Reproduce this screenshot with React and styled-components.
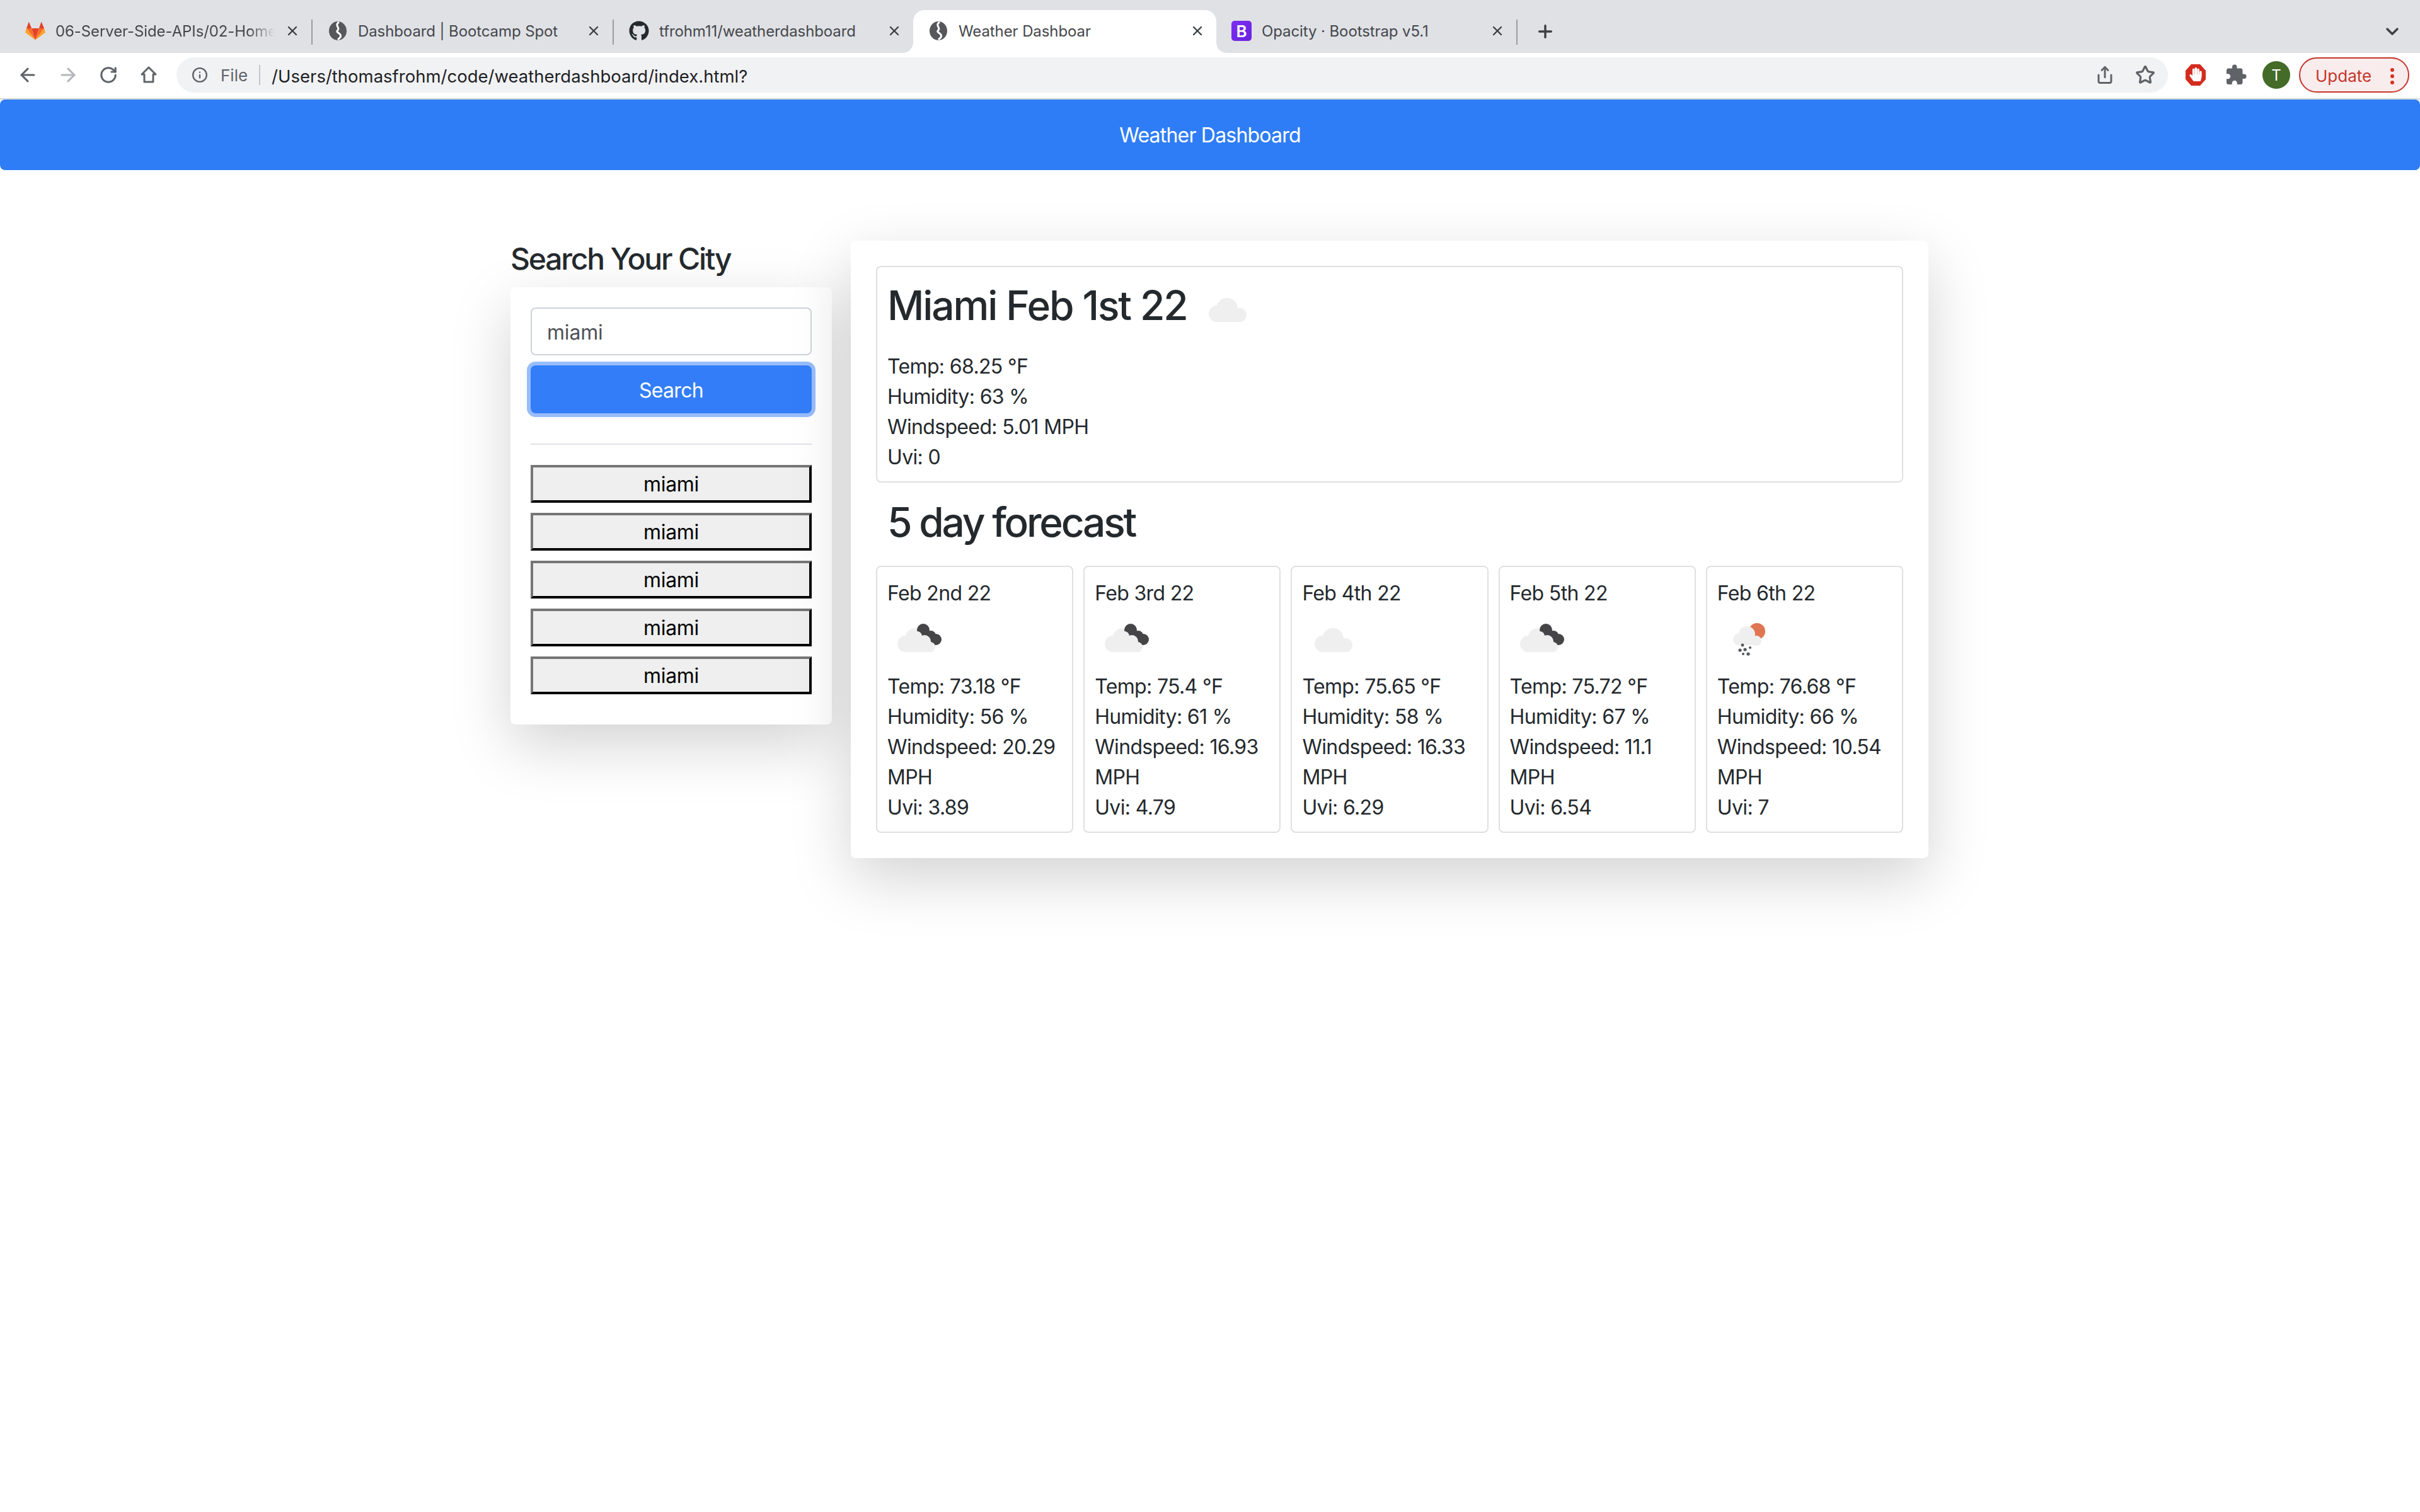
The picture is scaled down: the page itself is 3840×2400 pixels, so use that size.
import React from "react";
import styled, { createGlobalStyle } from "styled-components";
import { ArrowLeft, ArrowRight, RotateCw, Info, Share, Star, X, Plus, ChevronDown } from "lucide-react";
import { FaGithub, FaHandPaper } from "react-icons/fa";
import { MdExtension } from "react-icons/md";

const Global = createGlobalStyle`
  html, body { margin: 0; padding: 0; background: #fff; }
  body { font-family: Inter, "Liberation Sans", sans-serif; color: #24292d; min-height: 2400px; }
  * { box-sizing: border-box; }
`;

const TabBar = styled.div`
  height: 84px; background: #dfe1e5; display: flex; align-items: flex-end; padding-left: 16px; position: relative;
`;
const Tab = styled.div`
  width: ${p => p.$w}px; height: 68px; display: flex; align-items: center; gap: 16px; padding: 0 18px 2px 24px;
  position: relative; font-size: 24px; color: #45474b; letter-spacing: -.1px;
  background: ${p => (p.$active ? "#fff" : "transparent")};
  border-radius: 18px 18px 0 0;
  ${p => p.$active && `
    &::before, &::after { content: ""; position: absolute; bottom: 0; width: 16px; height: 16px; }
    &::before { left: -16px; background: radial-gradient(circle at 0 0, transparent 15.5px, #fff 16px); }
    &::after { right: -16px; background: radial-gradient(circle at 100% 0, transparent 15.5px, #fff 16px); }
  `}
`;
const TabTitle = styled.span`
  flex: 1; white-space: nowrap; overflow: hidden;
  ${p => p.$fade && `mask-image: linear-gradient(to right, #000 88%, transparent 100%);`}
`;
const TabClose = styled.span`
  width: 24px; height: 24px; display: flex; align-items: center; justify-content: center; color: #3c4043;
`;
const FavBox = styled.span`
  width: 32px; height: 32px; flex: none; display: flex; align-items: center; justify-content: center;
`;
const BootstrapFav = styled.span`
  width: 32px; height: 32px; flex: none; border-radius: 5px; background: linear-gradient(135deg,#7b2ff0,#6a22e0);
  color: #fff; font-size: 26px; font-weight: 600; display: flex; align-items: center; justify-content: center;
`;
const TabDivider = styled.span`
  width: 2px; height: 40px; flex: none; align-self: flex-start; margin-top: 31px; background: #9a9ca0;
`;
const NewTab = styled.span`
  margin-left: 28px; width: 32px; height: 32px; align-self: flex-start; margin-top: 34px; color: #3c4043;
  display: flex; align-items: center; justify-content: center;
`;
const TabMenu = styled.span`
  position: absolute; right: 28px; top: 34px; color: #3c4043; display: flex;
`;
const Toolbar = styled.div`
  height: 74px; background: #fff; border-bottom: 2px solid #d3d5d9; display: flex; align-items: center; padding: 0 17px 2px 12px;
`;
const NavBtn = styled.span`
  width: 64px; height: 56px; flex: none; display: flex; align-items: center; justify-content: center;
  color: ${p => (p.$off ? "#b4b6b9" : "#5f6368")};
`;
const Omnibox = styled.div`
  flex: 1; height: 56px; margin: 0 12px; background: #f1f2f4; border-radius: 28px; display: flex; align-items: center; padding: 0 4px 0 24px;
`;
const OmniLabel = styled.span`
  margin-left: 20px; font-size: 26px; color: #5f6368; padding-right: 18px; border-right: 2px solid #c4c6c9; height: 32px; line-height: 33px;
`;
const Url = styled.span`
  margin-left: 18px; padding-top: 3px; font-size: 27.5px; color: #202124; flex: 1; white-space: nowrap;
`;
const Avatar = styled.span`
  width: 44px; height: 44px; border-radius: 50%; background: #446b28; color: #fff; font-size: 24px;
  display: flex; align-items: center; justify-content: center;
`;
const UpdatePill = styled.span`
  margin-left: 4px; width: 175px; height: 56px; border: 2px solid #c5352b; border-radius: 28px; background: #f9ecec; color: #c5352b;
  display: flex; align-items: center; padding: 2px 0 0 24px; font-size: 26px; flex: none; position: relative;
`;
const PillDots = styled.span`
  position: absolute; right: 22px; top: 15px; display: flex; flex-direction: column; gap: 4px;
  & > i { display: block; width: 6px; height: 6px; border-radius: 50%; background: #d93025; }
`;
const NavBar = styled.header`
  height: 112px; background: #2f7df6; border-radius: 8px; color: #fff; font-size: 32px; letter-spacing: -.8px;
  display: flex; align-items: center; justify-content: center; padding-top: 1px;
`;
const Main = styled.main`
  display: flex; align-items: flex-start; gap: 30px; padding: 112px 0 0 810px;
`;
const LeftCol = styled.aside`
  width: 510px; flex: none;
`;
const SideHeading = styled.h4`
  margin: 0 0 16px; font-size: 48px; font-weight: 550; line-height: 1.2; letter-spacing: -2.2px;
`;
const Panel = styled.div`
  background: #fff; border-radius: 8px; box-shadow: 0 32px 96px rgba(0,0,0,.175);
`;
const SidePanel = styled(Panel)`
  padding: 32px 32px 48px; display: flex; flex-direction: column;
`;
const CityInput = styled.input`
  height: 76px; width: 100%; border: 2px solid #ced4da; border-radius: 8px; padding: 3px 24px 0; font: inherit; font-size: 32px; color: #4c5158; outline: none; letter-spacing: -.2px;
`;
const SearchButton = styled.button`
  margin-top: 16px; height: 76px; border: none; border-radius: 8px; background: #337ef8; color: #fff; font: inherit; font-size: 32px; letter-spacing: -.7px; padding: 3px 0 0;
  box-shadow: 0 0 0 6px #98bdfb;
`;
const Rule = styled.hr`
  margin: 48px 0 32px; border: none; height: 2px; background: #e0e2e7;
`;
const History = styled.div`
  display: flex; flex-direction: column; gap: 16px;
`;
const HistoryButton = styled.button`
  height: 60px; background: #efefef; border: 4px outset; border-color: #767676 #222 #222 #767676; color: #000;
  font: inherit; font-size: 32px; padding: 2px 0 0; letter-spacing: -.3px;
`;
const WeatherPanel = styled(Panel)`
  width: 1710px; flex: none; padding: 40px;
`;
const Box = styled.section`
  border: 2px solid #e0e0e0; border-radius: 8px; padding: 18px 16px 14px;
`;
const TitleRow = styled.div`
  display: flex; height: 100px; margin-bottom: 16px;
`;
const CityTitle = styled.h2`
  margin: 5px 0 0; font-size: 64px; font-weight: 550; line-height: 1.2; white-space: nowrap; letter-spacing: -2.1px;
`;
const TitleIcon = styled.span`
  width: 100px; height: 100px; margin: -2px 0 0 14px; flex: none;
`;
const Stat = styled.div`
  font-size: 32px; line-height: 48px; letter-spacing: -.65px;
`;
const ForecastTitle = styled.h2`
  margin: 25px 0 30px; padding-left: 18px; font-size: 64px; font-weight: 550; line-height: 1.2; letter-spacing: -3.2px;
`;
const ForecastGrid = styled.div`
  display: grid; grid-template-columns: repeat(5, 1fr); gap: 16px;
`;
const DayIcon = styled.div`
  width: 100px; height: 100px; margin: -2px 0 2px;
`;

const Cloud = ({ dx = 0 }) => (
  <g fill="#efefef" transform={`translate(${dx} 0)`}>
    <circle cx="29" cy="58" r="13" />
    <circle cx="45" cy="50" r="17" />
    <circle cx="65" cy="60" r="11" />
    <rect x="29" y="56" width="36" height="15" />
  </g>
);

const WeatherIcon = ({ kind }) => (
  <svg width="100" height="100" viewBox="0 0 100 100" style={{ filter: "blur(.5px)", display: "block" }}>
    {kind === "rain" ? (
      <>
        <circle cx="63" cy="38" r="13" fill="#e07552" />
        <g fill="#efefef">
          <circle cx="35" cy="51" r="10" />
          <circle cx="47" cy="43" r="13" />
          <circle cx="62" cy="53" r="8" />
          <rect x="35" y="48" width="27" height="12" />
        </g>
        <g fill="#55565a">
          <circle cx="40" cy="60" r="2.4" /><circle cx="36" cy="68" r="2.6" />
          <circle cx="44" cy="67" r="2.6" /><circle cx="52" cy="64" r="2" />
          <circle cx="41" cy="74" r="2" /><circle cx="49" cy="74" r="2.6" />
        </g>
      </>
    ) : (
      <Cloud dx={kind === "cloud" ? 4 : 0} />
    )}
    {kind === "broken" && (
      <>
        <g fill="#454547">
          <circle cx="57" cy="36" r="10" />
          <circle cx="69" cy="45" r="8" />
          <circle cx="77" cy="51" r="9" />
        </g>
        <g fill="#efefef">
          <circle cx="47" cy="46" r="8" />
          <circle cx="59" cy="54" r="10" />
          <circle cx="68" cy="63" r="8" />
        </g>
      </>
    )}
  </svg>
);

const Globe = () => (
  <svg width="30" height="32" viewBox="0 0 30 32">
    <ellipse cx="15" cy="16" rx="14" ry="15" fill="#55575b" />
    <path d="M17 2C9 7 19 11 15 15C10 19 23 20 19 26L15 30" fill="none" stroke="#fff" strokeWidth="3" />
  </svg>
);

const GitLab = () => (
  <svg width="33" height="30" viewBox="0 0 33 30">
    <polygon points="16.5,30 10.5,11 22.5,11" fill="#e24329" />
    <polygon points="16.5,30 10.5,11 2,11" fill="#fc6d26" />
    <polygon points="16.5,30 22.5,11 31,11" fill="#fc6d26" />
    <polygon points="2,11 0,17.5 16.5,30" fill="#fca326" />
    <polygon points="31,11 33,17.5 16.5,30" fill="#fca326" />
    <polygon points="2,11 10.5,11 6,0" fill="#e24329" />
    <polygon points="22.5,11 31,11 26.5,0" fill="#e24329" />
  </svg>
);

const HomeIcon = () => (
  <svg width="30" height="30" viewBox="0 0 30 30" fill="none" stroke="#5f6368" strokeWidth="3" strokeLinejoin="round">
    <path d="M15 3L26 14H22V26H8V14H4Z" />
  </svg>
);

const AdBlock = () => (
  <svg width="34" height="36" viewBox="0 0 34 36">
    <polygon points="10,1 24,1 33,11 33,25 24,35 10,35 1,25 1,11" fill="#d32c1f" />
    <foreignObject x="6" y="6" width="22" height="24">
      <FaHandPaper size={22} color="#fff" />
    </foreignObject>
  </svg>
);

const tabs = [
  { w: 478, fav: <GitLab />, title: "06-Server-Side-APIs/02-Homework", fade: true, div: true },
  { w: 476, fav: <Globe />, title: "Dashboard | Bootcamp Spot", div: true },
  { w: 475, fav: <FaGithub size={32} color="#24292e" />, title: "tfrohm11/weatherdashboard" },
  { w: 481, fav: <Globe />, title: "Weather Dashboar", active: true },
  { w: 476, bs: true, title: "Opacity · Bootstrap v5.1", div: true },
];

const days = [
  { date: "Feb 2nd 22", kind: "broken", temp: "73.18", hum: 56, wind: "20.29", uvi: "3.89" },
  { date: "Feb 3rd 22", kind: "broken", temp: "75.4", hum: 61, wind: "16.93", uvi: "4.79" },
  { date: "Feb 4th 22", kind: "cloud", temp: "75.65", hum: 58, wind: "16.33", uvi: "6.29" },
  { date: "Feb 5th 22", kind: "broken", temp: "75.72", hum: 67, wind: "11.1", uvi: "6.54" },
  { date: "Feb 6th 22", kind: "rain", temp: "76.68", hum: 66, wind: "10.54", uvi: "7" },
];

export default function App() {
  return (
    <>
      <Global />
      <TabBar>
        {tabs.map(t => (
          <React.Fragment key={t.title}>
            <Tab $w={t.w} $active={t.active}>
              {t.bs ? <BootstrapFav>B</BootstrapFav> : <FavBox>{t.fav}</FavBox>}
              <TabTitle $fade={t.fade}>{t.title}</TabTitle>
              <TabClose><X size={24} strokeWidth={2.4} /></TabClose>
            </Tab>
            {t.div && <TabDivider />}
          </React.Fragment>
        ))}
        <NewTab><Plus size={32} strokeWidth={2.6} /></NewTab>
        <TabMenu><ChevronDown size={32} strokeWidth={2.6} /></TabMenu>
      </TabBar>
      <Toolbar>
        <NavBtn><ArrowLeft size={34} strokeWidth={2.2} /></NavBtn>
        <NavBtn $off><ArrowRight size={34} strokeWidth={2.2} /></NavBtn>
        <NavBtn><RotateCw size={30} strokeWidth={2.4} /></NavBtn>
        <NavBtn><HomeIcon /></NavBtn>
        <Omnibox>
          <Info size={26} strokeWidth={2.2} color="#5f6368" />
          <OmniLabel>File</OmniLabel>
          <Url>/Users/thomasfrohm/code/weatherdashboard/index.html?</Url>
          <NavBtn><Share size={30} strokeWidth={2.4} /></NavBtn>
          <NavBtn><Star size={32} strokeWidth={2.4} /></NavBtn>
        </Omnibox>
        <NavBtn><AdBlock /></NavBtn>
        <NavBtn><MdExtension size={36} /></NavBtn>
        <NavBtn><Avatar>T</Avatar></NavBtn>
        <UpdatePill>Update<PillDots><i /><i /><i /></PillDots></UpdatePill>
      </Toolbar>
      <NavBar>Weather Dashboard</NavBar>
      <Main>
        <LeftCol>
          <SideHeading>Search Your City</SideHeading>
          <SidePanel>
            <CityInput defaultValue="miami" />
            <SearchButton>Search</SearchButton>
            <Rule />
            <History>
              {[0, 1, 2, 3, 4].map(i => <HistoryButton key={i}>miami</HistoryButton>)}
            </History>
          </SidePanel>
        </LeftCol>
        <WeatherPanel>
          <Box>
            <TitleRow>
              <CityTitle>Miami Feb 1st 22</CityTitle>
              <TitleIcon><WeatherIcon kind="cloud" /></TitleIcon>
            </TitleRow>
            <Stat>Temp: 68.25 °F</Stat>
            <Stat>Humidity: 63 %</Stat>
            <Stat>Windspeed: 5.01 MPH</Stat>
            <Stat>Uvi: 0</Stat>
          </Box>
          <ForecastTitle>5 day forecast</ForecastTitle>
          <ForecastGrid>
            {days.map(d => (
              <Box key={d.date}>
                <Stat>{d.date}</Stat>
                <DayIcon><WeatherIcon kind={d.kind} /></DayIcon>
                <Stat>Temp: {d.temp} °F</Stat>
                <Stat>Humidity: {d.hum} %</Stat>
                <Stat>Windspeed: {d.wind} MPH</Stat>
                <Stat>Uvi: {d.uvi}</Stat>
              </Box>
            ))}
          </ForecastGrid>
        </WeatherPanel>
      </Main>
    </>
  );
}
